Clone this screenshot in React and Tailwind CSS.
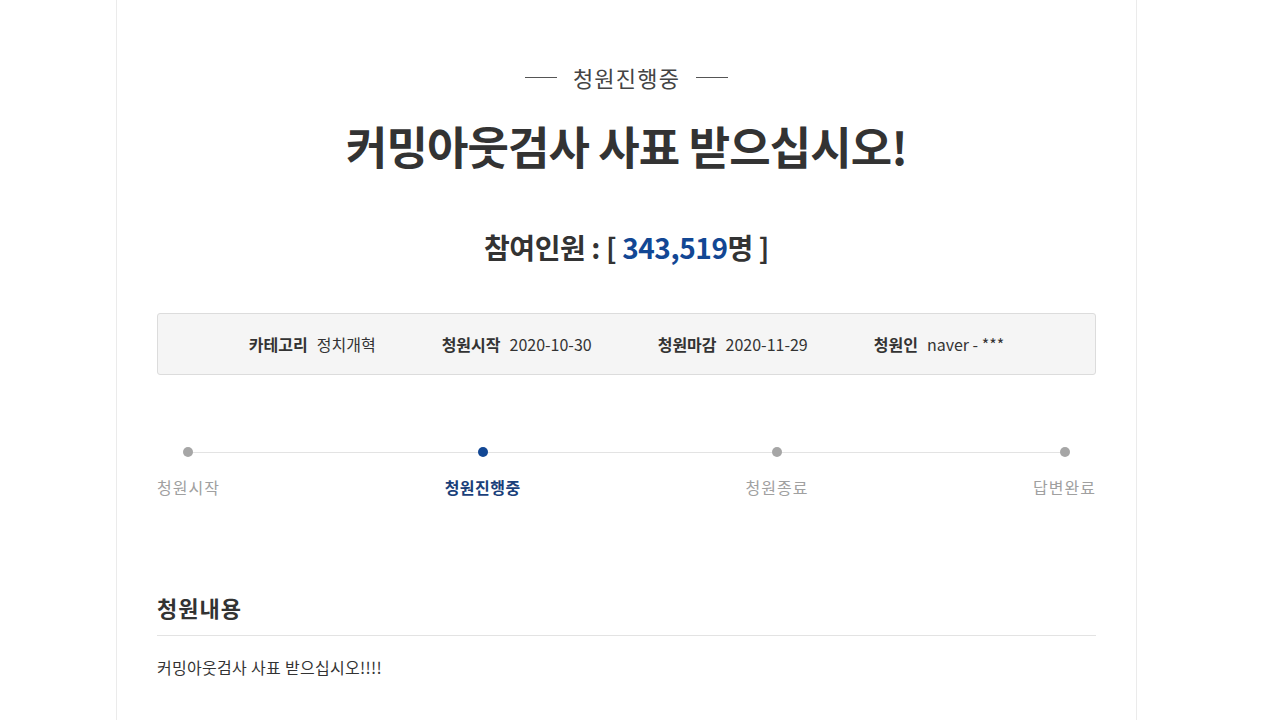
export default function App() {
  const font = { fontFamily: '"Noto Sans CJK KR", "Noto Sans", sans-serif' };
  const steps = [
    { label: "청원시작", active: false },
    { label: "청원진행중", active: true },
    { label: "청원종료", active: false },
    { label: "답변완료", active: false },
  ];
  return (
    <div className="min-h-[720px] bg-white" style={font}>
      <div className="ml-[116px] w-[1021px] min-h-[720px] border-x border-[#ebebeb] px-[40px] pt-[63px] pb-[40px]">
        <div className="flex items-center justify-center gap-[16px] h-[28px]">
          <span className="block w-[32px] h-px bg-[#555]"></span>
          <span className="text-[22px] leading-[28px] text-[#444] tracking-[1.2px]">청원진행중</span>
          <span className="block w-[32px] h-px bg-[#555]"></span>
        </div>
        <h1 className="mt-[27px] text-center text-[45px] leading-[56px] font-bold text-[#333] tracking-[-0.9px]">
          커밍아웃검사 사표 받으십시오!
        </h1>
        <div className="mt-[55px] text-center text-[28px] leading-[36px] font-bold text-[#333] tracking-[-0.4px]">
          참여인원 : [ <span className="text-[#124794]">343,519</span>명 ]
        </div>
        <div className="mt-[48px] h-[62px] rounded-[3px] border border-[#dcdcdc] bg-[#f5f5f5] flex items-center justify-center gap-[66px] text-[16px] text-[#333]">
          <div className="flex items-center gap-[9px]">
            <span className="font-bold">카테고리</span>
            <span>정치개혁</span>
          </div>
          <div className="flex items-center gap-[9px]">
            <span className="font-bold">청원시작</span>
            <span>2020-10-30</span>
          </div>
          <div className="flex items-center gap-[9px]">
            <span className="font-bold">청원마감</span>
            <span>2020-11-29</span>
          </div>
          <div className="flex items-center gap-[9px]">
            <span className="font-bold">청원인</span>
            <span>naver - ***</span>
          </div>
        </div>
        <div className="relative mt-[72px] flex justify-between">
          <div className="absolute left-[30px] right-[31px] top-[5px] h-px bg-[#e3e3e3]"></div>
          {steps.map((s) => (
            <div key={s.label} className="relative flex flex-col items-center">
              <span
                className={
                  s.active
                    ? "block w-[10px] h-[10px] rounded-full bg-[#124794]"
                    : "block w-[10px] h-[10px] rounded-full bg-[#a6a6a6]"
                }
              ></span>
              <span
                className={
                  s.active
                    ? "mt-[18px] text-[16px] leading-[24px] font-bold text-[#1a3f7a] tracking-[0.5px]"
                    : "mt-[18px] text-[16px] leading-[24px] text-[#a0a0a0] tracking-[1px]"
                }
              >
                {s.label}
              </span>
            </div>
          ))}
        </div>
        <div className="mt-[93px] pb-[13px] border-b border-[#e3e3e3]">
          <h2 className="text-[22px] leading-[30px] font-bold text-[#333] tracking-[1px]">청원내용</h2>
        </div>
        <p className="mt-[19px] text-[16px] leading-[24px] text-[#333] tracking-[0.3px]">
          커밍아웃검사 사표 받으십시오!!!!
        </p>
      </div>
    </div>
  );
}
